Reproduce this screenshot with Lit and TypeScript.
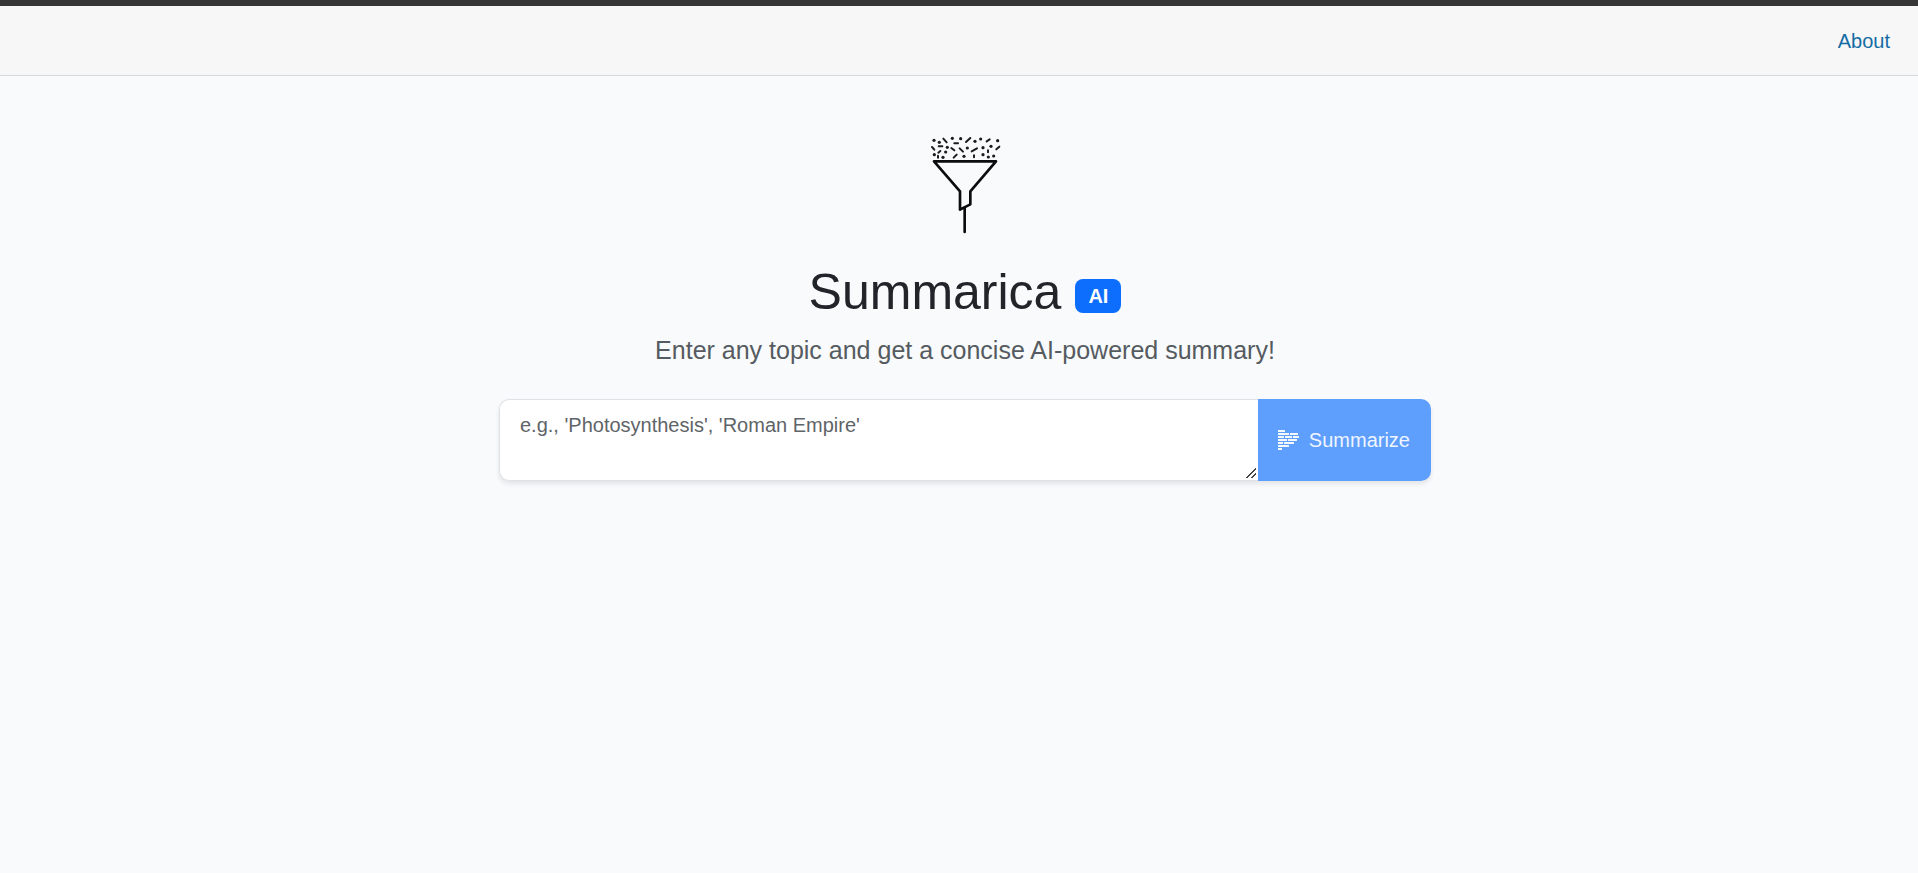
import { LitElement, html, css, svg } from "lit";
import { customElement, state } from "lit/decorators.js";

// Specks falling into the funnel: dots as [x, y], dashes as [x1, y1, x2, y2].
const DOTS = [
  [42, 43], [58, 49], [97, 37], [122, 38], [165, 46], [182, 39], [233, 44],
  [82, 64], [77, 78], [142, 66], [189, 65], [213, 61], [43, 86], [69, 94],
  [132, 91], [189, 86], [205, 93], [221, 90],
];
const DASHES = [
  [70, 38, 80, 49], [103, 52, 114, 52], [138, 48, 151, 36], [200, 46, 209, 40],
  [36, 63, 43, 71], [56, 61, 67, 61], [94, 66, 103, 73], [119, 67, 129, 77],
  [155, 76, 171, 67], [229, 70, 238, 62], [55, 80, 61, 75], [54, 89, 54, 95],
  [101, 95, 110, 86], [162, 88, 162, 94], [204, 73, 204, 79],
];

// Rows of text strokes in the button glyph: [x, y, length].
const ROWS = [
  [0, 1, 7], [0, 4, 11], [12, 4, 8], [0, 7, 6], [7, 7, 7], [15, 7, 6],
  [0, 10, 9], [10, 10, 9], [0, 13, 5], [6, 13, 10], [0, 16, 11], [0, 19, 4],
];

@customElement("app-root")
export class AppRoot extends LitElement {
  static styles = css`
    :host {
      display: block;
      box-sizing: border-box;
      min-height: 100vh;
      background: #f8fafc;
      color: #212529;
      border-top: 6px solid #363636;
      font: 20px/30px "Liberation Sans", Arial, sans-serif;
    }
    .navbar {
      display: flex;
      justify-content: flex-end;
      padding: 20px 28px 19px;
      background: #f7f7f7;
      border-bottom: 1px solid #d6d8da;
    }
    .link {
      color: #146ca4;
      text-decoration: none;
    }
    .main {
      display: flex;
      flex-direction: column;
      align-items: center;
      padding: 50px 0 40px 12px;
      text-align: center;
    }
    .funnel {
      width: 90px;
      height: 115px;
    }
    .title {
      display: flex;
      align-items: center;
      gap: 14px;
      margin: 21px 0 9px;
      font-size: 50px;
      line-height: 60px;
      font-weight: 400;
    }
    .badge {
      margin-top: 8px;
      padding: 2px 13px;
      border-radius: 8px;
      background: #0d6efd;
      color: #fff;
      font-size: 20px;
      line-height: 30px;
      font-weight: 700;
    }
    .lead {
      margin: 0 0 30px;
      color: #555b60;
      font-size: 25px;
      line-height: 38px;
    }
    .group {
      display: flex;
      box-sizing: border-box;
      width: 100%;
      max-width: 932px;
      border-radius: 10px;
      box-shadow: 0 3px 5px rgba(0, 0, 0, 0.09);
    }
    .field {
      flex: 1;
      min-width: 0;
      box-sizing: border-box;
      height: 82px;
      margin: 0;
      padding: 10px 20px;
      border: 1px solid #dee2e6;
      border-right: 0;
      border-radius: 10px 0 0 10px;
      background: #fff;
      color: #212529;
      font: inherit;
      resize: vertical;
      outline: none;
    }
    .field::placeholder {
      color: #5f6468;
      opacity: 1;
    }
    .field::-webkit-resizer {
      background:
        linear-gradient(135deg, transparent 46%, #444 46%, #444 56%, transparent 56%, transparent 74%, #444 74%, #444 84%, transparent 84%)
        3px 3px / 10px 10px no-repeat;
    }
    .submit {
      display: flex;
      align-items: center;
      gap: 10px;
      padding: 0 21px 0 20px;
      border: 0;
      border-radius: 0 10px 10px 0;
      background: #5e9efc;
      color: #eff5ff;
      font: inherit;
    }
    .glyph {
      width: 21px;
      height: 20px;
    }
  `;

  @state() private topic = "";

  render() {
    return html`
      <nav class="navbar"><a class="link" href="#about">About</a></nav>
      <main class="main">
        <svg class="funnel" viewBox="0 0 270 345" aria-hidden="true">
          <g fill="none" stroke="#0c0c0c" stroke-width="8">
            <path d="M42 106H228L151 196V235L120 251V196Z" stroke-linejoin="round" />
            <path d="M134 244V318" stroke-width="8" stroke-linecap="round" />
          </g>
          <g fill="#1c1c1c">${DOTS.map(([x, y]) => svg`<circle cx=${x} cy=${y} r="4.8" />`)}</g>
          <g stroke="#1c1c1c" stroke-width="6" stroke-linecap="round">
            ${DASHES.map(([a, b, c, d]) => svg`<line x1=${a} y1=${b} x2=${c} y2=${d} />`)}
          </g>
        </svg>
        <h1 class="title">Summarica <span class="badge">AI</span></h1>
        <p class="lead">Enter any topic and get a concise AI-powered summary!</p>
        <form class="group" @submit=${(e: Event) => e.preventDefault()}>
          <textarea
            class="field"
            aria-label="Topic"
            placeholder="e.g., 'Photosynthesis', 'Roman Empire'"
            .value=${this.topic}
            @input=${(e: Event) => (this.topic = (e.target as HTMLTextAreaElement).value)}
          ></textarea>
          <button class="submit" type="submit" ?disabled=${!this.topic.trim()}>
            <svg class="glyph" viewBox="0 0 21 20" aria-hidden="true">
              <g fill="#f4f8ff">
                ${ROWS.map(([x, y, w]) => svg`<rect x=${x} y=${y - 1} width=${w} height="2" />`)}
              </g>
            </svg>
            Summarize
          </button>
        </form>
      </main>
    `;
  }
}
